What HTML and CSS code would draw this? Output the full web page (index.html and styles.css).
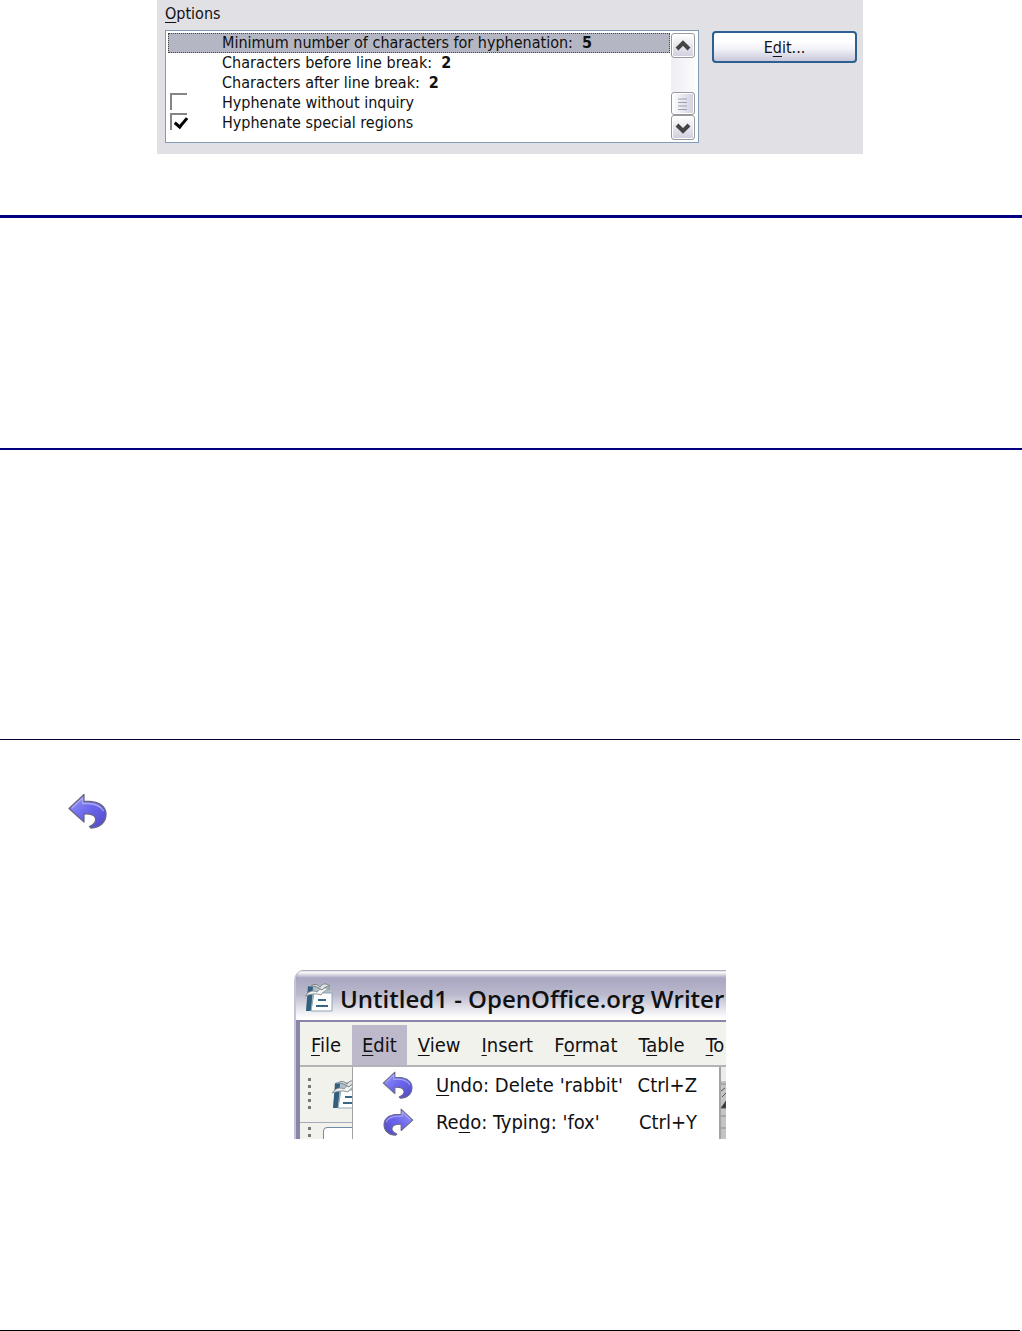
FILE: index.html
```
<!DOCTYPE html>
<html lang="en">
<head>
    <meta charset="UTF-8">
    <title>Writer Guide</title>
    <link rel="stylesheet" href="styles.css">
</head>
<body>
    <svg class="defs" width="0" height="0" aria-hidden="true">
        <defs>
            <linearGradient id="arrow-fill" x1="0" y1="0" x2="1" y2="1">
                <stop offset="0" stop-color="#9c9cf4"/>
                <stop offset="0.5" stop-color="#6c66ee"/>
                <stop offset="1" stop-color="#4f49c4"/>
            </linearGradient>
            <symbol id="arrow" viewBox="0 0 40 36">
                <path d="M1 15.500 L16 1.500 V8.500 H22 C32 9 38 14 38 21.500 C38 29 32 35 23 35 L21.500 33.500 C27 31 28.500 28 27.500 25 C26 21.500 22 20.500 16 21 V29 Z" fill="url(#arrow-fill)" stroke="#6a6684" stroke-width="1.3" stroke-linejoin="round"/>
                <path d="M4 15 L14.500 5 V10.500 H21 C28 11 33 13.500 35.500 18" fill="none" stroke="#a9a9f8" stroke-width="1.3"/>
            </symbol>
            <symbol id="writer" viewBox="0 0 30 32">
                <path d="M5 3 H22 L28 9 V29 H2 Z" fill="#aebfc9"/>
                <path d="M4 4 L9 5 L7 29 H2 Z" fill="#315f7c"/>
                <path d="M10 11 H28 V29 H7 Z" fill="#fff" stroke="#8ea7b5"/>
                <path d="M14 18 H22 M12 24 H24" stroke="#396886" stroke-width="2"/>
                <path d="M1 14 C5 9 9 8 13 10 C16 6 21 5 26 7 C21 8 19 10 17 13 C11 11 7 12 1 14 Z" fill="#f3f4f4" stroke="#8d9496"/>
                <path d="M7 4 C11 1 14 3 16 5 C19 1 22 1 26 4 C22 4 20 6 18 8 C14 5 11 4 7 4 Z" fill="#dfe3e4" stroke="#777f83"/>
            </symbol>
        </defs>
    </svg>

    <div class="figure">
        <div class="options">
            <h2 class="options-label"><u>O</u>ptions</h2>
            <div class="options-row">
                <div class="listbox">
                    <ul class="list">
                        <li class="selected"><span>Minimum number of characters for hyphenation:</span><b>5</b></li>
                        <li><span>Characters before line break:</span><b>2</b></li>
                        <li><span>Characters after line break:</span><b>2</b></li>
                        <li><input type="checkbox" id="inquiry"><label for="inquiry">Hyphenate without inquiry</label></li>
                        <li><input type="checkbox" id="regions" checked><label for="regions">Hyphenate special regions</label></li>
                    </ul>
                    <div class="scrollbar">
                        <button type="button" aria-label="Scroll up">
                            <svg width="16" height="12" viewBox="0 0 16 12"><path d="M2 9 L8 3 L14 9" fill="none" stroke="#444" stroke-width="4"/></svg>
                        </button>
                        <div class="track"></div>
                        <div class="thumb">
                            <svg width="10" height="12" viewBox="0 0 10 12"><path d="M0 1 H9 M0 4.500 H9 M0 8 H9 M0 11.500 H9" stroke="#9b9fb2"/></svg>
                        </div>
                        <button type="button" aria-label="Scroll down">
                            <svg width="16" height="12" viewBox="0 0 16 12"><path d="M2 3 L8 9 L14 3" fill="none" stroke="#444" stroke-width="4"/></svg>
                        </button>
                    </div>
                </div>
                <button type="button" class="edit-button">E<u>d</u>it...</button>
            </div>
        </div>
    </div>

    <div class="section section-chapter"></div>
    <div class="section section-heading"></div>

    <div class="section section-undo">
        <svg class="undo-icon" width="40" height="36"><use href="#arrow"/></svg>
        <div class="window">
            <div class="titlebar">
                <svg width="30" height="32"><use href="#writer"/></svg>
                <span>Untitled1 - OpenOffice.org Writer</span>
            </div>
            <div class="window-body">
                <div class="menubar">
                    <button type="button"><u>F</u>ile</button>
                    <button type="button" class="open"><u>E</u>dit</button>
                    <button type="button"><u>V</u>iew</button>
                    <button type="button"><u>I</u>nsert</button>
                    <button type="button">F<u>o</u>rmat</button>
                    <button type="button">T<u>a</u>ble</button>
                    <button type="button"><u>T</u>o</button>
                </div>
                <div class="toolbar">
                    <div class="grip"></div>
                    <svg width="30" height="32"><use href="#writer"/></svg>
                </div>
                <div class="toolbar toolbar-format">
                    <div class="grip"></div>
                    <div class="style-box"></div>
                </div>
                <div class="menu">
                    <button type="button">
                        <svg width="32" height="28"><use href="#arrow"/></svg>
                        <span><u>U</u>ndo: Delete 'rabbit'</span>
                        <kbd>Ctrl+Z</kbd>
                    </button>
                    <button type="button">
                        <svg class="flip" width="32" height="28"><use href="#arrow"/></svg>
                        <span>Re<u>d</u>o: Typing: 'fox'</span>
                        <kbd>Ctrl+Y</kbd>
                    </button>
                </div>
                <svg class="toolbar-edge" width="5" height="72" viewBox="0 0 5 72">
                    <path d="M0 0 H5 V72 H0 Z" fill="#c4c4c4"/>
                    <path d="M0 0 H5 V14 H0 Z" fill="#ececea"/>
                    <path d="M0 17 H5 M0 49 H5 M0 61 H5" stroke="#8a8a8e"/>
                    <path d="M0 24 L4 21 M1 30 L5 26 M0 41 L5 34 V41 Z" fill="#333" stroke="#55555e"/>
                </svg>
            </div>
        </div>
    </div>
</body>
</html>
```
FILE: styles.css
```
* {
    box-sizing: border-box;
}
body {
    margin: 0;
    background: #fff;
    color: #111;
    font-family: "DejaVu Sans Condensed", "DejaVu Sans", sans-serif;
    font-size: 16px;
}
button {
    font-family: inherit;
    color: inherit;
    padding: 0;
}
u {
    text-decoration-thickness: 1px;
    text-underline-offset: 3px;
}
svg {
    display: block;
    flex: none;
}
.defs {
    position: absolute;
}

/* Hyphenation options */
.figure {
    padding-right: 2px;
}
.options {
    max-width: 706px;
    margin: 0 auto;
    padding: 4px 6px 11px 8px;
    background: #e1e0e5;
}
.options-label {
    margin: 0 0 6px;
    font-size: 16px;
    font-weight: 400;
    line-height: 20px;
}
.options-row {
    display: flex;
    align-items: flex-start;
    gap: 13px;
}
.listbox {
    display: flex;
    flex: 1;
    height: 113px;
    padding: 2px;
    border: 1px solid #7f9db9;
    background: #fff;
}
.list {
    flex: 1;
    margin: 0;
    padding: 0;
    list-style: none;
}
.list li {
    position: relative;
    display: flex;
    gap: 9px;
    padding-left: 54px;
    line-height: 20px;
    white-space: nowrap;
}
.list .selected {
    background: #b5b6c3;
    outline: 1px dotted #444;
    outline-offset: -1px;
}
.list input {
    appearance: none;
    position: absolute;
    left: 2px;
    top: 0;
    width: 17px;
    height: 17px;
    margin: 0;
    border: solid #858585;
    border-width: 2px 0 0 2px;
}
.list input:checked::after {
    content: "";
    position: absolute;
    left: 5px;
    top: 0;
    width: 5px;
    height: 10px;
    border: solid #000;
    border-width: 0 3px 3px 0;
    transform: rotate(40deg);
}
.scrollbar {
    display: flex;
    flex-direction: column;
    width: 26px;
    padding: 0 1px;
}
.scrollbar button,
.thumb {
    display: flex;
    align-items: center;
    justify-content: center;
    height: 25px;
    border: 1px solid #98989f;
    border-radius: 3px;
    background: linear-gradient(#fff, #cfcede);
    box-shadow: inset 0 0 0 1px #fff;
}
.scrollbar .thumb {
    height: 23px;
    background: linear-gradient(90deg, #fff, #cfcede);
}
.track {
    flex: 1;
    background: linear-gradient(90deg, #eeeef3, #fbfbfd);
}
.edit-button {
    width: 145px;
    height: 32px;
    margin-top: 1px;
    border: 2px solid #2b6091;
    border-radius: 4px;
    background: linear-gradient(#fff 30%, #efeff7 60%, #c9c7da);
    font-size: 16px;
}

/* Document sections */
.section {
    border-top: 1px solid #000;
}
.section-chapter {
    height: 233px;
    margin-top: 61px;
    border-top: 3px solid #000080;
}
.section-heading {
    height: 291px;
    border-top: 2px solid #000080;
}
.section-undo {
    height: 592px;
    margin-right: 2px;
    border-top-color: #000030;
    border-bottom: 1px solid #000;
}
.undo-icon {
    margin: 53px 0 0 68px;
}

/* Writer window */
.window {
    max-width: 432px;
    height: 169px;
    margin: 141px auto 0;
    overflow: hidden;
    border-left: 2px solid #c5c4d5;
    border-top-left-radius: 10px;
    background: #8886a8;
}
.titlebar {
    display: flex;
    align-items: center;
    gap: 6px;
    height: 50px;
    padding: 6px 0 0 8px;
    background: linear-gradient(#9795ad 0, #fff 2px, #a9a7c2 8px, #b9b8cc 24px, #fff 48px);
    font-family: "Open Sans", sans-serif;
    font-size: 24px;
    font-weight: 600;
    white-space: nowrap;
}
.window-body {
    position: relative;
    margin: 2px 0 0 4px;
    background: #f2f2ed;
}
.menubar {
    display: flex;
    gap: 1px;
    height: 45px;
    padding: 3px 0 0 1px;
    border-bottom: 2px solid #b4b3b8;
}
.menubar button {
    flex: none;
    padding: 0 10px;
    border: 0;
    background: none;
    font-size: 20px;
}
.menubar button:last-child {
    padding-right: 0;
}
.menubar .open {
    background: #bdb9ca;
}
.toolbar {
    display: flex;
    align-items: center;
    gap: 20px;
    height: 56px;
    padding-left: 8px;
    border-bottom: 1px solid #a9a8b8;
}
.grip {
    width: 3px;
    height: 33px;
    background: repeating-linear-gradient(#777 0 3px, transparent 3px 7px);
}
.toolbar-format {
    align-items: flex-start;
    gap: 12px;
    padding-top: 4px;
}
.style-box {
    width: 60px;
    height: 30px;
    border: 1px solid #7089a5;
    border-radius: 4px;
    background: #fff;
}
.menu {
    position: absolute;
    top: 45px;
    left: 52px;
    right: 5px;
    height: 80px;
    border: solid #a3a3a3;
    border-width: 0 2px 0 1px;
    background: #fff;
}
.menu button {
    display: flex;
    align-items: center;
    width: 100%;
    height: 37px;
    padding: 0 22px 2px 29px;
    border: 0;
    background: none;
    font-size: 20px;
    text-align: left;
    white-space: nowrap;
}
.menu span {
    flex: 1;
    margin-left: 22px;
}
.menu kbd {
    font-family: inherit;
}
.toolbar-edge {
    position: absolute;
    top: 45px;
    right: 0;
}
.flip {
    transform: scaleX(-1);
}
```
